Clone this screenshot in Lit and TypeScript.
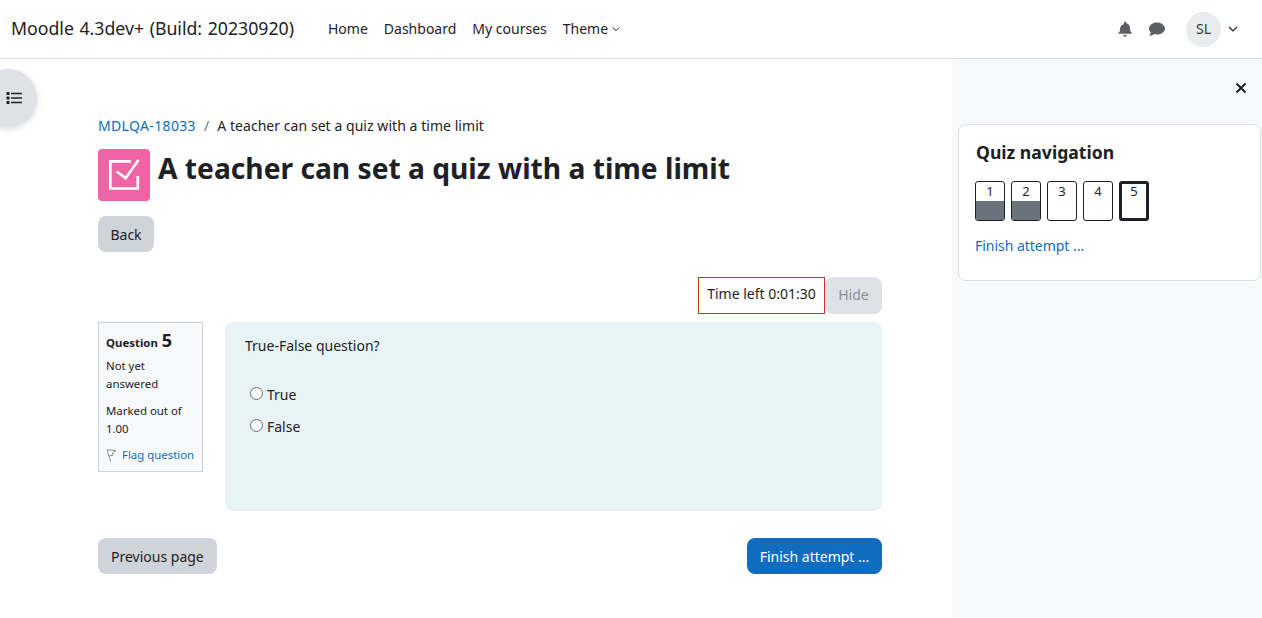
import { LitElement, html, css } from "lit";
import { customElement } from "lit/decorators.js";

const chevron = (s: number) => html`<svg class="chev" width=${s} height=${s} viewBox="0 0 12 12"><path d="M2 4l4 4 4-4" fill="none" stroke="#1d2125" stroke-width="1.2"/></svg>`;

@customElement("app-root")
export class AppRoot extends LitElement {
  static styles = css`
    :host { display: block; height: 618px; overflow: hidden; position: relative; background: #fff; color: #1d2125; font-family: "Noto Sans", "Open Sans", sans-serif; font-size: 14px; line-height: 22.5px; }
    * { box-sizing: border-box; }
    a { color: #0f6cbf; text-decoration: none; }
    .nav { height: 59px; border-bottom: 1px solid #dee2e6; display: flex; align-items: center; padding-left: 11px; padding-right: 23px; }
    .brand { font-size: 17.7px; width: 317px; white-space: nowrap; word-spacing: 1px; padding-bottom: 2px; }
    .menu { display: flex; gap: 16px; white-space: nowrap; }
    .menu span { display: inline-flex; align-items: center; gap: 3px; }
    .right { margin-left: auto; display: flex; align-items: center; }
    .right svg.ic { display: block; }
    .ics { display: flex; gap: 16px; margin-right: 21px; align-items: center; }
    .avatar { width: 35px; height: 35px; border-radius: 50%; background: #e9ecef; display: flex; align-items: center; justify-content: center; font-size: 14px; color: #343a40; margin-right: 6px; }
    .body { display: flex; height: 559px; }
    .main { flex: 1; padding: 56px 0 0 98px; }
    .col { width: 784px; }
    .crumbs { display: flex; gap: 8px; height: 22px; align-items: center; white-space: nowrap; letter-spacing: .05px; }
    .crumbs a { letter-spacing: .35px; }
    .crumbs i { font-style: normal; color: #6a737b; }
    .title { display: flex; gap: 8px; margin-top: 12px; align-items: flex-start; }
    .logo { width: 52px; height: 52px; border-radius: 4px; background: #f064a5; display: flex; }
    h1 { margin: 0; font-size: 28.2px; line-height: 38px; font-weight: 700; white-space: nowrap; }
    .btn { display: inline-flex; align-items: center; justify-content: center; height: 36px; padding: 2px 13px 0; border-radius: 8px; background: #ced4da; color: #1d2125; white-space: nowrap; }
    .back { margin-top: 15px; width: 56px; padding: 2px 0 0; }
    .timer { margin-top: 25px; display: flex; justify-content: flex-end; }
    .tbox { width: 127px; height: 37px; border: 1px solid #ca3120; display: flex; align-items: center; justify-content: center; padding-bottom: 2px; white-space: nowrap; }
    .hide { width: 57px; height: 37px; background: #dee2e6; color: #8a8f94; border-radius: 8px; padding: 0; }
    .q { display: flex; gap: 22px; margin-top: 8px; align-items: flex-start; }
    .info { width: 105px; height: 150px; background: #f8f9fa; border: 1px solid #cad0d7; padding: 8px 7px; font-size: 11.4px; line-height: 18px; }
    .qno { font-weight: 700; display: flex; align-items: baseline; gap: 4px; height: 24px; }
    .qno b { font-size: 18px; font-weight: 700; }
    .info p { margin: 0; }
    .info .st { margin-top: 2px; }
    .info .mk { margin-top: 9px; }
    .flag { display: flex; align-items: center; gap: 5px; margin-top: 8px; white-space: nowrap; }
    .content { flex: 1; height: 189px; background: #e7f3f5; border-radius: 8px; padding: 13px 20px; }
    .opts { margin-top: 27px; margin-left: 5px; display: flex; flex-direction: column; gap: 10px; }
    .opt { display: flex; align-items: center; gap: 4px; height: 22px; }
    .radio { width: 13px; height: 13px; border-radius: 50%; border: 1px solid #6b6b6b; background: #fff; margin-bottom: 5px; }
    .foot { display: flex; justify-content: space-between; margin-top: 27px; }
    .primary { background: #0f6cbf; color: #fff; width: 135px; padding: 2px 0 0; }
    .drawer { width: 310px; background: #f8f9fa; padding: 6px; }
    .close { display: flex; justify-content: flex-end; height: 59px; padding: 15px 7px 0 0; }
    .card { background: #fff; border: 1px solid #dee2e6; border-radius: 8px; height: 157px; width: 303px; padding: 15px 16px; }
    .card h5 { margin: 0 0 0 1px; font-size: 17.6px; line-height: 24px; font-weight: 700; }
    .pages { display: flex; gap: 6px; margin-top: 17px; }
    .pg { width: 30px; height: 40px; border: 1px solid #1d2125; border-radius: 3px; background: #fff; text-align: center; font-size: 13px; line-height: 18px; overflow: hidden; position: relative; }
    .pg.cur { border-width: 3px; line-height: 14px; }
    .pg .fill { position: absolute; left: 0; right: 0; bottom: 0; height: 19px; background: #6a737b; }
    .fin { display: block; margin: 14px 0 0; letter-spacing: -.03px; }
    .toggle { position: absolute; left: -21px; top: 69px; width: 58px; height: 58px; border-radius: 50%; background: #dee2e6; box-shadow: 0 2px 6px rgba(0,0,0,.15); display: flex; align-items: center; justify-content: flex-end; padding-right: 15px; }
  `;
  render() {
    return html`
      <div class="nav">
        <div class="brand">Moodle 4.3dev+ (Build: 20230920)</div>
        <div class="menu"><span>Home</span><span>Dashboard</span><span>My courses</span><span>Theme ${chevron(10)}</span></div>
        <div class="right">
          <div class="ics">
            <svg class="ic" width="16" height="16" viewBox="0 0 16 16"><path fill="#5b5f63" d="M8 0.5a1 1 0 0 1 1 1v.6c2.4.5 4 2.4 4 4.9 0 3 .9 3.900 1.700 4.700.3.4 0 1-.5 1H1.800c-.5 0-.8-.6-.5-1C2.100 11.900 3 11 3 8c0-2.500 1.600-4.400 4-4.900V1.500a1 1 0 0 1 1-1zM6.200 14h3.600A1.800 1.800 0 0 1 8 15.800 1.800 1.800 0 0 1 6.200 14z"/></svg>
            <svg class="ic" width="16" height="16" viewBox="0 0 16 16"><path fill="#5b5f63" d="M8 1.500c4.400 0 8 2.700 8 6s-3.600 6-8 6c-1 0-2-.15-2.900-.4C4.100 14 2.600 14.800.6 14.800c-.3 0-.5-.3-.3-.5.7-.8 1.300-1.800 1.500-2.800C.7 10.400 0 9 0 7.500c0-3.300 3.600-6 8-6z"/></svg>
          </div>
          <div class="avatar">SL</div>
          ${chevron(12)}
        </div>
      </div>
      <div class="body">
        <div class="main"><div class="col">
          <div class="crumbs"><a>MDLQA-18033</a><i>/</i><span>A teacher can set a quiz with a time limit</span></div>
          <div class="title">
            <div class="logo"><svg width="52" height="52" viewBox="0 0 52 52" fill="none" stroke="#fff" stroke-width="2.700"><path d="M39.800 27v12.500H12.300V12.300H33"/><path d="M18.700 22.500l9 6.700L40.500 11"/></svg></div>
            <h1>A teacher can set a quiz with a time limit</h1>
          </div>
          <div class="btn back">Back</div>
          <div class="timer"><div class="tbox">Time left 0:01:30</div><div class="btn hide">Hide</div></div>
          <div class="q">
            <div class="info">
              <div class="qno">Question <b>5</b></div>
              <p class="st">Not yet answered</p>
              <p class="mk">Marked out of 1.00</p>
              <div class="flag"><svg width="11" height="13" viewBox="0 0 11 13" fill="none" stroke="#8a8f94"><path d="M1 .8l3.600 11.700M1 .8L10 1.500 6.500 4 7 6 3 7"/></svg><a>Flag question</a></div>
            </div>
            <div class="content">
              <div>True-False question?</div>
              <div class="opts">
                <div class="opt"><span class="radio"></span>True</div>
                <div class="opt"><span class="radio"></span>False</div>
              </div>
            </div>
          </div>
          <div class="foot"><div class="btn">Previous page</div><div class="btn primary">Finish attempt ...</div></div>
        </div></div>
        <div class="drawer">
          <div class="close"><svg width="16" height="16" viewBox="0 0 16 16"><path d="M3.500 3.500l9 9M12.500 3.500l-9 9" stroke="#1d2125" stroke-width="2"/></svg></div>
          <div class="card">
            <h5>Quiz navigation</h5>
            <div class="pages">
              <div class="pg">1<div class="fill"></div></div>
              <div class="pg">2<div class="fill"></div></div>
              <div class="pg">3</div>
              <div class="pg">4</div>
              <div class="pg cur">5</div>
            </div>
            <a class="fin">Finish attempt ...</a>
          </div>
        </div>
      </div>
      <div class="toggle"><svg width="16" height="16" viewBox="0 0 16 16"><g fill="#1d2125"><rect x="0.500" y="2" width="3" height="3" rx=".6"/><rect x="0.500" y="6.500" width="3" height="3" rx=".6"/><rect x="0.500" y="11" width="3" height="3" rx=".6"/><rect x="5" y="2.700" width="11" height="1.600" rx=".5"/><rect x="5" y="7.200" width="11" height="1.600" rx=".5"/><rect x="5" y="11.700" width="11" height="1.600" rx=".5"/></g></svg></div>
    `;
  }
}
